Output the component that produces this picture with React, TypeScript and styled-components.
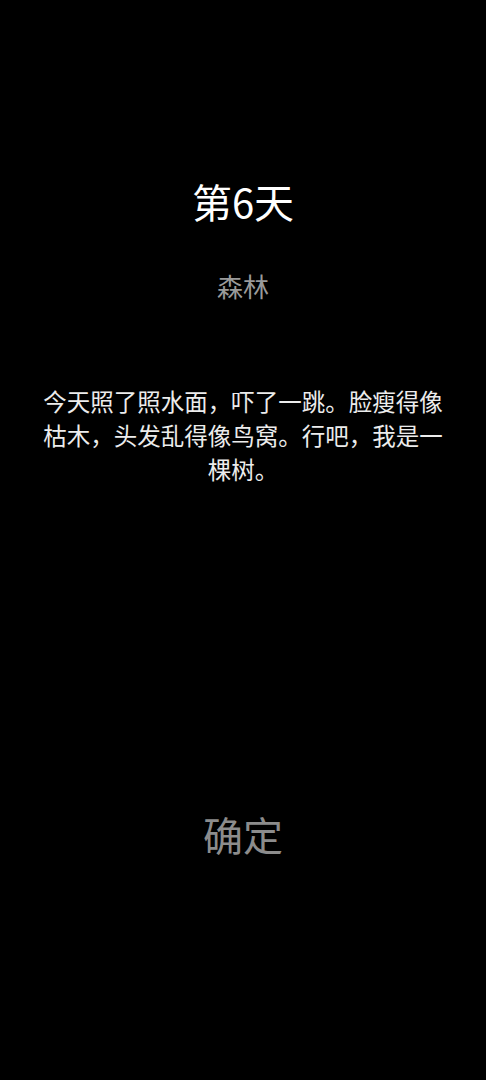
import styled, { createGlobalStyle } from "styled-components";

const GlobalStyle = createGlobalStyle`
  html, body {
    margin: 0;
    padding: 0;
    background: #000;
  }
  body {
    font-family: "Noto Sans CJK SC", "Noto Sans", sans-serif;
  }
`;

const Page = styled.div`
  width: 486px;
  height: 1080px;
  background: #000;
  display: flex;
  flex-direction: column;
  align-items: center;
  padding-top: 177px;
  box-sizing: border-box;
`;

const Title = styled.h1`
  margin: 0;
  font-size: 40px;
  line-height: 48px;
  font-weight: 400;
  color: #fff;
`;

const Place = styled.div`
  margin-top: 44px;
  font-size: 26px;
  line-height: 34px;
  color: #9a9a9a;
`;

const Story = styled.p`
  margin: 81px 0 0;
  padding: 0 40px;
  box-sizing: border-box;
  width: 100%;
  font-size: 23.5px;
  line-height: 34px;
  text-align: center;
  color: #ececec;
`;

const ConfirmButton = styled.button`
  margin-top: 323px;
  background: transparent;
  border: none;
  padding: 0;
  font-family: inherit;
  font-size: 40px;
  line-height: 50px;
  color: #8c8c8c;
  cursor: pointer;
`;

export default function App() {
  return (
    <>
      <GlobalStyle />
      <Page>
        <Title>第6天</Title>
        <Place>森林</Place>
        <Story>今天照了照水面，吓了一跳。脸瘦得像枯木，头发乱得像鸟窝。行吧，我是一棵树。</Story>
        <ConfirmButton>确定</ConfirmButton>
      </Page>
    </>
  );
}
